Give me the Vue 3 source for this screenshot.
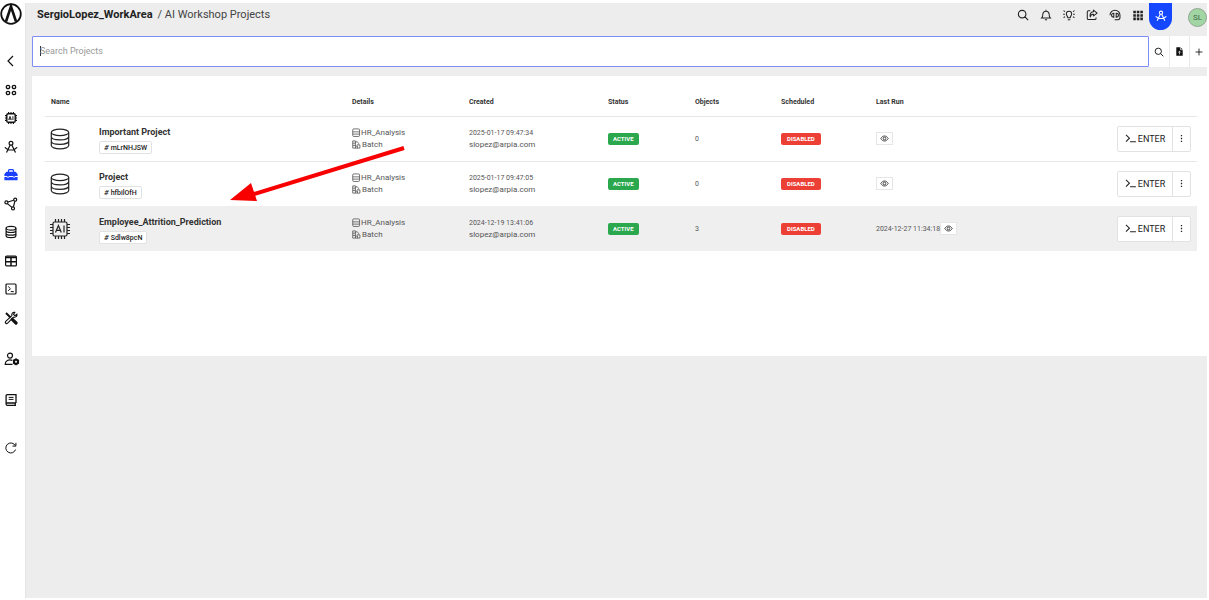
<script setup>
import { ref, onMounted } from 'vue'

const query = ref('')
const searchBox = ref(null)
onMounted(() => searchBox.value.focus())

const mainLinks = [
  { icon: 'back', label: 'Back' },
  { icon: 'apps', label: 'Apps' },
  { icon: 'chip', label: 'AI' },
  { icon: 'compass', label: 'Design' },
  { icon: 'toolbox', label: 'Workshop', active: true },
  { icon: 'nodes', label: 'Graph' },
  { icon: 'db', label: 'Database' },
  { icon: 'table', label: 'Tables' },
  { icon: 'terminal', label: 'Terminal' },
  { icon: 'tools', label: 'Tools' },
]
const lowerLinks = [
  { icon: 'usercog', label: 'User settings' },
  { icon: 'book', label: 'Documentation' },
  { icon: 'refresh', label: 'Refresh' },
]
const topActions = [
  { icon: 'search', label: 'Search' },
  { icon: 'bell', label: 'Notifications' },
  { icon: 'bulb', label: 'Ideas' },
  { icon: 'share', label: 'Share' },
  { icon: 'support', label: 'Support' },
  { icon: 'grid', label: 'Applications' },
]
const projects = [
  { icon: 'bigdb', name: 'Important Project', code: 'mLrNHJSW', created: '2025-01-17 09:47:34', objects: 0, lastRun: '' },
  { icon: 'bigdb', name: 'Project', code: 'hfbilOfH', created: '2025-01-17 09:47:05', objects: 0, lastRun: '' },
  { icon: 'bigchip', name: 'Employee_Attrition_Prediction', code: 'Sdlw8pcN', created: '2024-12-19 13:41:06', objects: 3, lastRun: '2024-12-27 11:34:18', hovered: true },
]
</script>

<template>
  <svg class="sprite" aria-hidden="true">
    <symbol id="i-back" viewBox="0 0 14 14"><path d="M9 2 4 7l5 5" fill="none" stroke="currentColor" stroke-width="1.2" /></symbol>
    <symbol id="i-apps" viewBox="0 0 14 14"><g fill="none" stroke="currentColor" stroke-width="1.3"><circle cx="4" cy="4" r="1.7" /><circle cx="10" cy="4" r="1.7" /><circle cx="4" cy="10" r="1.7" /><circle cx="10" cy="10" r="1.7" /></g></symbol>
    <symbol id="i-chip" viewBox="0 0 14 14"><g fill="none" stroke="currentColor"><rect x="2.8" y="2.8" width="8.4" height="8.4" rx="1.3" stroke-width="1.4" /><path d="M4.6 1v2M7 1v2M9.4 1v2M4.6 11v2M7 11v2M9.4 11v2M1 4.6h2M1 7h2M1 9.4h2M11 4.6h2M11 7h2M11 9.4h2" stroke-width="1.1" /><path d="m4.700 9 1.300-3.600L7.300 9M5 8h2M8.900 5.200V9" stroke-width=".9" /></g></symbol>
    <symbol id="i-compass" viewBox="0 0 14 14"><g fill="none" stroke="currentColor" stroke-width="1.2"><circle cx="7" cy="3.2" r="1.9" /><path d="M6.200 5 2.500 12.600M7.800 5l3.700 7.600M.8 7.400C2.600 9.400 4.600 10 7 10s4.400-.6 6.200-2.600" /></g></symbol>
    <symbol id="i-toolbox" viewBox="0 0 14 14"><path d="M4.500 4V2.600c0-.6.400-1 1-1h3c.6 0 1 .4 1 1V4" fill="none" stroke="currentColor" stroke-width="1.2" /><path d="M2.500 3.800h9L13.600 6v2H.4V6zM.4 8.900h2.800v1h1.600v-1h4.400v1h1.600v-1h2.800v3.300H.4z" fill="currentColor" /><path d="M4 7v2.500M10 7v2.500" stroke="currentColor" stroke-width="1.2" /></symbol>
    <symbol id="i-nodes" viewBox="0 0 14 14"><g fill="none" stroke="currentColor" stroke-width="1.2"><circle cx="11.200" cy="2.700" r="1.500" /><circle cx="2.400" cy="5.400" r="1.500" /><circle cx="9" cy="11.400" r="1.500" /><path d="M3.900 5 9.700 3.200M3.400 6.600l4.500 3.800M10.900 4.200 9.400 9.900" /></g></symbol>
    <symbol id="i-db" viewBox="0 0 14 14"><g fill="none" stroke="currentColor" stroke-width="1.2"><ellipse cx="7" cy="3.2" rx="4.9" ry="1.9" /><path d="M2.100 3.200v7.600c0 1 2.200 1.900 4.900 1.900s4.900-.9 4.900-1.900V3.200M2.100 5.800c0 1 2.200 1.700 4.900 1.700s4.900-.7 4.900-1.700M2.100 8.400c0 1 2.200 1.700 4.900 1.700s4.900-.7 4.900-1.700" /></g></symbol>
    <symbol id="i-table" viewBox="0 0 14 14"><rect x="1.6" y="2.1" width="10.8" height="9.800" rx="1" fill="none" stroke="currentColor" stroke-width="1.2" /><path d="M1.600 3.500h10.800M1.600 7.800h10.800M7 3v9" stroke="currentColor" stroke-width="1.5" /></symbol>
    <symbol id="i-terminal" viewBox="0 0 14 14"><g fill="none" stroke="currentColor" stroke-width="1.2"><rect x="2" y="2" width="10" height="10" rx="1" /><path d="m4.200 4.500 2.200 2.200-2.200 2.200M6.800 9.600h3" stroke-width="1" /></g></symbol>
    <symbol id="i-tools" viewBox="0 0 14 14"><g fill="none" stroke="currentColor"><path d="m2 2 4.500 4.500" stroke-width="2" /><path d="m8.300 8.300 3.700 3.700" stroke-width="3.2" stroke-linecap="round" /><path d="M12.900 3.200 11 4.700 9.500 3.400l1.300-2C8.800.9 7.300 2.600 7.900 4.600L1.500 10.600c-.8 1.200.8 2.600 1.900 1.700l6.200-6.100c2 .5 3.900-.9 3.300-3z" stroke-width="1.1" /></g></symbol>
    <symbol id="i-usercog" viewBox="0 0 16 14"><g fill="none" stroke="currentColor" stroke-width="1.2"><circle cx="6" cy="3.600" r="2.500" /><path d="M8.300 8.300C4.500 7.300 1.200 8.600 1.200 12.300H8.500" /><circle cx="12" cy="9.800" r="2.100" stroke-width="2" /><path d="M12 6.300v7M9 8.100l6 3.400M9 11.500l6-3.400" stroke-width="1.3" /></g><circle cx="12" cy="9.800" r="1" fill="#fff" /></symbol>
    <symbol id="i-book" viewBox="0 0 14 14"><g fill="none" stroke="currentColor" stroke-width="1.3"><path d="M12 10V1.700H3.300c-.7 0-1.200.5-1.200 1.200v8.200c0 .7.500 1.200 1.200 1.200H12M2.300 10H12M11.200 10v2.300" /><path d="M4.700 4.400h4.800M4.700 6.400h4.800" stroke-width="1" /></g></symbol>
    <symbol id="i-refresh" viewBox="0 0 14 14"><path d="M11.300 4.700A5 5 0 1 0 11.600 8.500M11.900 1.800v3.300H8.500" fill="none" stroke="currentColor" stroke-width="1" /></symbol>
    <symbol id="i-search" viewBox="0 0 14 14"><path d="M9.300 9.300 13 13M10.400 6A4.400 4.400 0 1 1 1.600 6a4.400 4.400 0 0 1 8.800 0z" fill="none" stroke="currentColor" stroke-width="1.3" /></symbol>
    <symbol id="i-bell" viewBox="0 0 14 14"><path d="M7 1v1.500M2 10.400h10c-1.300-1.200-1.300-2.200-1.300-4A3.700 3.700 0 0 0 7 2.500a3.700 3.700 0 0 0-3.700 3.900c0 1.800 0 2.800-1.300 4zM5.700 12.500h2.600" fill="none" stroke="currentColor" stroke-width="1.2" /></symbol>
    <symbol id="i-bulb" viewBox="0 0 14 14"><path d="M5.600 10.200C5.600 8.600 3.900 7.800 3.900 5.600a3.100 3.100 0 0 1 6.200 0c0 2.200-1.700 3-1.700 4.600zM5.600 12.500h2.800M.2 6H2.200M11.800 6h2M.6 1.900l1.800 1.100M13.400 1.900l-1.800 1.100M.6 10.100l1.800-1.100M13.400 10.100l-1.800-1.100" fill="none" stroke="currentColor" stroke-width="1.2" /></symbol>
    <symbol id="i-share" viewBox="0 0 14 14"><path d="M5 2H2.800C2 2 1.500 2.500 1.500 3.200v7.900c0 .7.500 1.200 1.300 1.200h7.600c.7 0 1.300-.5 1.300-1.200V9.800M8.700 1.300 13 4.700 8.700 8.100V6.200C6.500 6.100 5.400 7 5 9.300 4 6 5.400 3.500 8.700 3.300z" fill="none" stroke="currentColor" stroke-width="1.2" stroke-linejoin="round" /></symbol>
    <symbol id="i-support" viewBox="0 0 14 14"><path d="M1.200 7.200a5.800 5.800 0 0 1 11.600 0v2.800c0 1.500-1 2.500-2.500 2.500H6.600M5.600 5C4 5 3 5.900 3 7.300s1 2.200 2.600 2.200zM8.400 5C10 5 11 5.900 11 7.300s-1 2.200-2.600 2.200z" fill="none" stroke="currentColor" stroke-width="1.2" /></symbol>
    <symbol id="i-grid" viewBox="0 0 14 14"><path d="M1.500 2h3v3h-3zM5.600 2h3v3h-3zM9.700 2h3v3h-3zM1.500 6h3v3h-3zM5.600 6h3v3h-3zM9.700 6h3v3h-3zM1.500 10h3v3h-3zM5.600 10h3v3h-3zM9.700 10h3v3h-3z" fill="currentColor" /></symbol>
    <symbol id="i-file" viewBox="0 0 14 14"><path d="M2 .5h6.500L12 4v9.500H2z" fill="currentColor" /><path d="M8.500.5v3.700H12.500M7 11.500V6.800M5 8.500l2-2 2 2" fill="none" stroke="#fff" stroke-width="1.1" /></symbol>
    <symbol id="i-plus" viewBox="0 0 14 14"><path d="M7 1v12M1 7h12" stroke="currentColor" stroke-width="1.5" /></symbol>
    <symbol id="i-bigdb" viewBox="0 0 22 22"><g fill="none" stroke="currentColor" stroke-width="1.2"><ellipse cx="11" cy="4.400" rx="8.700" ry="3.200" /><path d="M2.300 4.400v13.200c0 1.800 3.900 3.200 8.700 3.200s8.700-1.400 8.700-3.200V4.400M2.300 8.800c0 1.800 3.900 3.100 8.700 3.100s8.700-1.300 8.700-3.100M2.300 13.200c0 1.800 3.900 3.100 8.700 3.100s8.700-1.300 8.700-3.100" /></g></symbol>
    <symbol id="i-bigchip" viewBox="0 0 22 22"><g fill="none" stroke="currentColor" stroke-width="1.2"><rect x="4" y="4" width="14" height="14" rx="1.500" /><path d="M6.500 1v3M9.500 1v3M12.500 1v3M15.500 1v3M6.500 18v3M9.500 18v3M12.500 18v3M15.500 18v3M1 6.500h3M1 9.500h3M1 12.500h3M1 15.500h3M18 6.500h3M18 9.500h3M18 12.500h3M18 15.500h3" /><path d="m6.500 14.500 2.900-7 2.900 7M7.500 12.300h3.800M15 7.500v7" /></g></symbol>
    <symbol id="i-drive" viewBox="0 0 10 10"><g fill="none" stroke="currentColor" stroke-width=".9"><rect x=".8" y="1" width="7.600" height="8.400" rx="1.200" /><path d="M.8 4.300h7.600M.8 6.800h7.600" /></g></symbol>
    <symbol id="i-batch" viewBox="0 0 10 10"><g fill="none" stroke="currentColor" stroke-width=".9"><path d="M.8 1h3v8h-3zM.8 3.500h3M.8 6h3M3.800 3 5.600 1.600l1.800 2.200-3.600 4.500M6.600 5.400h2.200V9H3.800M6.100 6.500v2.500" /></g></symbol>
    <symbol id="i-eye" viewBox="0 0 10 10"><g fill="none" stroke="currentColor" stroke-width="1"><path d="M.9 5C2.800 1.300 7.200 1.300 9.100 5 7.200 8.700 2.800 8.700.9 5z" /><circle cx="5" cy="5" r="1.500" /></g></symbol>
    <symbol id="i-prompt" viewBox="0 0 12 10"><path d="m1 1 3.800 3.700L1 8.400M5.500 8.700H12" fill="none" stroke="currentColor" stroke-width="1.200" /></symbol>
    <symbol id="i-dots" viewBox="0 0 10 10"><path d="M4.300 1h1.400v1.500H4.300zM4.300 4.200h1.400v1.500H4.300zM4.300 7.400h1.400v1.500H4.300z" fill="currentColor" /></symbol>
  </svg>

  <div class="app">
    <aside class="side">
      <a href="#" class="logo" aria-label="Home">
        <svg viewBox="0 0 22 22"><circle cx="11" cy="11" r="9.800" fill="#fff" stroke="#111" stroke-width="1.800" /><path d="M6 18.500 11 3.500l5 15" fill="none" stroke="#111" stroke-width="2.600" /></svg>
      </a>
      <nav class="links" aria-label="Main">
        <a v-for="l in mainLinks" :key="l.icon" href="#" :class="{ active: l.active }" :aria-label="l.label"><svg class="ic"><use :href="'#i-' + l.icon" /></svg></a>
      </nav>
      <nav class="lower" aria-label="Account">
        <a v-for="l in lowerLinks" :key="l.icon" href="#" :aria-label="l.label"><svg class="ic" :class="{ wide: l.icon === 'usercog' }"><use :href="'#i-' + l.icon" /></svg></a>
      </nav>
    </aside>

    <div class="body">
      <header class="top">
        <h1><b>SergioLopez_WorkArea</b><span>/ AI Workshop Projects</span></h1>
        <div class="actions">
          <button v-for="a in topActions" :key="a.icon" type="button" :aria-label="a.label"><svg class="ic12"><use :href="'#i-' + a.icon" /></svg></button>
        </div>
        <button type="button" class="studio" aria-label="Workshop"><svg class="ic12"><use href="#i-compass" /></svg></button>
        <button type="button" class="avatar">SL</button>
      </header>

      <main>
        <form class="search" @submit.prevent>
          <input ref="searchBox" v-model="query" type="text" placeholder="Search Projects" aria-label="Search Projects">
          <button type="submit" aria-label="Search"><svg class="ic10"><use href="#i-search" /></svg></button>
          <button type="button" aria-label="Import"><svg class="ic9"><use href="#i-file" /></svg></button>
          <button type="button" aria-label="Add"><svg class="ic8"><use href="#i-plus" /></svg></button>
        </form>

        <section class="card">
          <table>
            <colgroup>
              <col class="c-icon"><col class="c-name"><col class="c-details"><col class="c-created"><col class="c-status"><col class="c-objects"><col class="c-sched"><col><col class="c-act">
            </colgroup>
            <thead>
              <tr>
                <th colspan="2">Name</th><th>Details</th><th>Created</th><th>Status</th><th>Objects</th><th>Scheduled</th><th>Last Run</th><th></th>
              </tr>
            </thead>
            <tbody>
              <tr v-for="p in projects" :key="p.code" :class="{ hovered: p.hovered }">
                <td class="kind"><svg class="ic22"><use :href="'#i-' + p.icon" /></svg></td>
                <td>
                  <div class="stack name"><strong>{{ p.name }}</strong><span class="code"><i>#</i> {{ p.code }}</span></div>
                </td>
                <td>
                  <div class="stack details">
                    <span><svg class="ic9"><use href="#i-drive" /></svg>HR_Analysis</span>
                    <span class="batch"><svg class="ic9"><use href="#i-batch" /></svg>Batch</span>
                  </div>
                </td>
                <td><div class="stack"><span>{{ p.created }}</span><span class="mail">slopez@arpia.com</span></div></td>
                <td><span class="badge on">ACTIVE</span></td>
                <td>{{ p.objects }}</td>
                <td><span class="badge off">DISABLED</span></td>
                <td>
                  <div class="run"><span v-if="p.lastRun">{{ p.lastRun }}</span><button type="button" class="eye" aria-label="View run"><svg class="ic9"><use href="#i-eye" /></svg></button></div>
                </td>
                <td>
                  <div class="group">
                    <button type="button" class="enter"><svg class="prompt"><use href="#i-prompt" /></svg>ENTER</button><button type="button" class="more" aria-label="More"><svg class="ic9"><use href="#i-dots" /></svg></button>
                  </div>
                </td>
              </tr>
            </tbody>
          </table>
        </section>
      </main>
    </div>

    <svg class="arrow" viewBox="0 0 176 60" aria-hidden="true"><path d="M174 5 24 51" stroke="#f90000" stroke-width="4" /><path d="M0 57 21 40l6 18z" fill="#f90000" /></svg>
  </div>
</template>

<style>
body { background: #fff; }
</style>

<style scoped>
* { box-sizing: border-box; }
.sprite { position: absolute; width: 0; height: 0; }
svg { display: block; flex: none; }
button { font: inherit; color: inherit; border: 0; background: none; padding: 0; margin: 0; display: flex; align-items: center; justify-content: center; cursor: pointer; }
a { color: inherit; text-decoration: none; }
.app { position: relative; display: flex; min-height: 100vh; padding: 3px 2px 2px 0; font-family: Roboto, "Liberation Sans", sans-serif; font-size: 7px; line-height: 12px; color: #333; }
.side { width: 25px; flex: none; color: #111; display: flex; flex-direction: column; }
.logo svg { width: 22px; height: 22px; }
.links { height: 271px; margin-top: 29px; display: flex; flex-direction: column; justify-content: space-between; }
.links a, .lower a { display: block; padding-left: 4px; }
.links .active { color: #1a3fff; }
.lower { margin-top: 27px; display: flex; flex-direction: column; gap: 27px; }
.lower a:last-child { margin-top: 7px; }
.ic { width: 14px; height: 14px; }
.ic.wide { width: 16px; }
.ic8 { width: 8px; height: 8px; }
.ic9 { width: 9px; height: 9px; }
.ic10 { width: 10px; height: 10px; }
.ic12 { width: 12px; height: 12px; }
.ic22 { width: 22px; height: 22px; }
.body { flex: 1; min-width: 0; background: #ededed; border-left: 1px solid #e4e4e4; }
.top { display: flex; align-items: flex-start; height: 33px; padding-left: 11px; }
h1 { flex: 1; display: flex; gap: 5px; margin: 0; font-size: 11px; line-height: 24px; font-weight: 400; color: #444; white-space: nowrap; }
h1 b { color: #222; font-weight: 700; }
.actions { display: flex; height: 24px; gap: 11px; padding-right: 5px; color: #222; }
.studio { width: 23px; height: 27px; padding-bottom: 2px; border-radius: 0 0 12px 12px; background: #1447ff; color: #fff; }
.avatar { width: 19px; height: 19px; margin: 5px 0 0 16px; border: 1px solid #8fa690; border-radius: 50%; background: #a1d6a4; color: #47684a; font-size: 8px; }
main { padding-left: 6px; }
.search { display: flex; height: 31px; }
.search input { flex: 1; min-width: 0; border: 1px solid #7f8dfa; border-radius: 1px; padding: 0 7px 2px; background: #fff linear-gradient(#333, #333) 7px 9px / 1px 10px no-repeat; caret-color: transparent; font: 9px Roboto, "Liberation Sans", sans-serif; color: #222; outline: 0; }
.search input::placeholder { color: #999; opacity: 1; }
.search button { width: 20px; background: #fff; border-right: 1px solid #e8e8e8; color: #111; }
.search button:first-of-type { width: 21px; }
.search button:last-child { width: 17px; border-right: 0; }
.card { margin-top: 9px; min-height: 280px; padding: 11px 10px 0 13px; background: #fff; }
table { width: 100%; border-collapse: collapse; table-layout: fixed; }
th, td { padding: 0 6px; text-align: left; vertical-align: middle; white-space: nowrap; }
th { height: 29px; padding-top: 1px; font-weight: 700; color: #333; }
td { height: 45px; border-top: 1px solid #e5e7ea; color: #555; }
td.kind { padding-left: 4px; color: #222; }
.hovered td { background: #efefef; border-color: #efefef; }
.c-icon { width: 48px; }
.c-name { width: 253px; }
.c-details { width: 117px; }
.c-created { width: 139px; }
.c-status { width: 87px; }
.c-objects { width: 86px; }
.c-sched { width: 95px; }
.c-act { width: 86px; }
.stack { display: flex; flex-direction: column; align-items: flex-start; }
.name { gap: 3px; padding-top: 3px; }
.name strong { font-size: 9px; color: #333; }
.code { display: flex; align-items: center; gap: 2px; height: 13px; padding: 0 4px; border: 1px solid #e2e2e2; border-radius: 2px; background: #fff; font-size: 7px; font-weight: 500; color: #222; }
.code i { font-size: 8px; }
.details { font-size: 8px; }
.details span { display: flex; align-items: center; }
.details .batch { gap: 1px; }
.mail { font-size: 8px; }
.badge { display: inline-block; padding: 0 5px; border-radius: 2px; color: #fff; font-size: 6px; font-weight: 700; }
.on { background: #2ba84e; }
.off { padding: 0 6px; background: #ec4036; }
.run { display: flex; align-items: center; }
.eye { width: 17px; height: 13px; border: 1px solid #e6e6e6; background: #fff; color: #333; }
.group { display: flex; height: 26px; border: 1px solid #e2e2e2; border-radius: 2px; background: #fff; color: #222; }
.enter { flex: 1; gap: 2px; font-size: 9px; }
.prompt { width: 11px; height: 9px; }
.more { width: 18px; border-left: 1px solid #e2e2e2; }
.arrow { position: absolute; left: 230px; top: 143px; width: 176px; height: 60px; pointer-events: none; }
</style>
